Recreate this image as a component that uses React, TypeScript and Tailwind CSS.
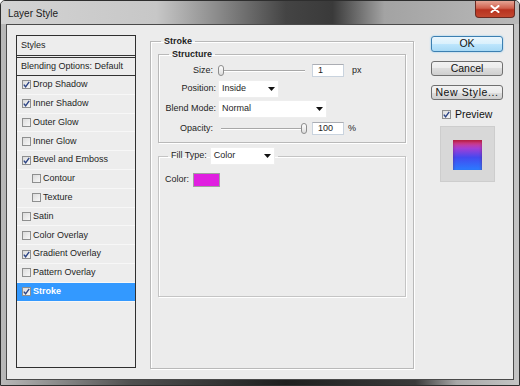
import React from "react";

type Item = { label: string; checked?: boolean; indent?: boolean; active?: boolean };

const items: Item[] = [
  { label: "Drop Shadow", checked: true },
  { label: "Inner Shadow", checked: true },
  { label: "Outer Glow" },
  { label: "Inner Glow" },
  { label: "Bevel and Emboss", checked: true },
  { label: "Contour", indent: true },
  { label: "Texture", indent: true },
  { label: "Satin" },
  { label: "Color Overlay" },
  { label: "Gradient Overlay", checked: true },
  { label: "Pattern Overlay" },
  { label: "Stroke", checked: true, active: true },
];

const Check = ({ checked }: { checked?: boolean }) => (
  <div className="w-[9px] h-[9px] shrink-0 border border-[#8e8f8f] bg-[linear-gradient(135deg,#dcdcdc,#f7f7f7)] flex items-center justify-center">
    {checked && (
      <svg width="7" height="7" viewBox="0 0 7 7">
        <path d="M0.8 3.6 L2.6 5.8 L6.2 0.8" fill="none" stroke="#2d4585" strokeWidth="1.4" />
      </svg>
    )}
  </div>
);

const Arrow = () => (
  <svg width="7" height="4" viewBox="0 0 7 4" className="shrink-0">
    <path d="M0 0 H7 L3.5 4 Z" fill="#111" />
  </svg>
);

const Select = ({ value, w }: { value: string; w: string }) => (
  <div className={`${w} h-[18px] bg-white border border-[#eeeeee] flex items-center justify-between pl-[3px] pr-[3px]`}>
    <span>{value}</span>
    <Arrow />
  </div>
);

const Slider = ({ end }: { end?: boolean }) => (
  <div className="relative w-[90px] h-[13px] flex items-center px-[3px]">
    <div className="w-full h-[2px] border-t border-[#a8a8a8] border-b border-b-white" />
    <div
      className={`absolute top-[1px] w-[6px] h-[11px] rounded-[3px] border border-[#8d8d8d] bg-[linear-gradient(#ffffff,#dcdcdc)] ${
        end ? "right-[1px]" : "left-0"
      }`}
    />
  </div>
);

const Input = ({ value }: { value: string }) => (
  <div className="w-[32px] h-[13px] bg-white border border-[#c9d3de] border-t-[#abadb3] flex items-center pl-[5px]">
    {value}
  </div>
);

const Button = ({ label, primary, cls }: { label: string; primary?: boolean; cls?: string }) => (
  <div
    className={`w-[72px] flex items-center justify-center rounded-[3px] text-[10.5px] text-[#111] ${
      primary
        ? "h-[16px] border border-[#3c7fb1] bg-[linear-gradient(#eaf6fd,#d9f0fc_50%,#bee6fd_50%,#a7d9f5)] shadow-[0_0_2px_#7ec4f0]"
        : "h-[15px] border border-[#707070] bg-[linear-gradient(#f2f2f2,#ebebeb_50%,#dddddd_50%,#cfcfcf)]"
    } ${cls ?? ""}`}
  >
    {label}
  </div>
);

export default function App() {
  return (
    <div className="w-[520px] h-[386px] flex flex-col border border-[#2e2e2e] rounded-t-[5px] overflow-hidden bg-[linear-gradient(to_right,#b9b9b9,#505050_25%,#1f1f1f_55%,#3a3a3a_80%,#a8a8a8_88%,#c4c4c4)] font-['Liberation_Sans',Arial,sans-serif] text-[9px] text-[#1e1e1e]">
      {/* title bar */}
      <div className="h-[23px] shrink-0 flex items-start justify-between bg-[linear-gradient(to_right,#d3d3d3_0%,#c7c7c7_30%,#8a8a8a_42%,#444_55%,#3a3a3a_64%,#a3a3a3_74%,#b9b9b9_100%)]">
        <span className="ml-[7px] mt-[5px] text-[10px] text-[#1b1b1b]">Layer Style</span>
        <div className="mr-[4px] w-[40px] h-[17px] rounded-b-[4px] border border-t-0 border-[#6a2a22] bg-[linear-gradient(#e6a595,#d0604d_45%,#b8321f_55%,#c2472f)] flex items-center justify-center">
          <svg width="10" height="8" viewBox="0 0 10 8">
            <path d="M1.5 1 L8.5 7 M8.5 1 L1.5 7" stroke="#fff" strokeWidth="2" strokeLinecap="round" />
          </svg>
        </div>
      </div>

      {/* client area */}
      <div className="flex-1 mx-[5px] mb-[5px] border border-[#4a4a4a] bg-[#ececec] flex items-start pl-[9px]">
        {/* styles list */}
        <div className="mt-[10px] w-[120px] h-[333px] border border-[#2f2f2f] bg-[#ededed] flex flex-col">
          <div className="h-[22px] flex items-center pl-[4px] border-b-[3px] border-double border-[#333]">Styles</div>
          <div className="h-[18px] flex items-center pl-[4px] border-b border-[#333]">Blending Options: Default</div>
          {items.map((it) => (
            <div
              key={it.label}
              className={`h-[18.8px] flex items-center gap-[2px] border-b border-[#f7f7f7] ${
                it.indent ? "pl-[15px]" : "pl-[5px]"
              } ${it.active ? "bg-[#3399ff] text-white font-bold" : ""}`}
            >
              <Check checked={it.checked} />
              <span>{it.label}</span>
            </div>
          ))}
        </div>

        {/* stroke group */}
        <fieldset className="ml-[14px] mt-[11px] w-[264px] h-[333px] border border-[#b9b9b9] shadow-[1px_1px_0_#fff,inset_1px_1px_0_#fff] flex flex-col">
          <legend className="ml-[10px] px-[3px] leading-[11px] font-bold">Stroke</legend>

          <fieldset className="ml-[7px] mt-[2px] w-[248px] border border-[#b9b9b9] shadow-[1px_1px_0_#fff,inset_1px_1px_0_#fff] pb-[7px]">
            <legend className="ml-[10px] px-[3px] leading-[11px] font-bold">Structure</legend>
            <div className="mt-[4px] h-[13px] flex items-center">
              <span className="w-[57px] text-right pr-[3px]">Size:</span>
              <div className="ml-[2px]">
                <Slider />
              </div>
              <div className="ml-[4px]">
                <Input value="1" />
              </div>
              <span className="ml-[8px]">px</span>
            </div>
            <div className="mt-[3px] h-[18px] flex items-center">
              <span className="w-[57px] text-right">Position:</span>
              <div className="ml-[2px]">
                <Select value="Inside" w="w-[61px]" />
              </div>
            </div>
            <div className="mt-[2px] h-[18px] flex items-center">
              <span className="w-[57px] text-right">Blend Mode:</span>
              <div className="ml-[2px]">
                <Select value="Normal" w="w-[109px]" />
              </div>
            </div>
            <div className="mt-[4px] h-[13px] flex items-center">
              <span className="w-[57px] text-right pr-[3px]">Opacity:</span>
              <div className="ml-[2px]">
                <Slider end />
              </div>
              <div className="ml-[4px]">
                <Input value="100" />
              </div>
              <span className="ml-[4px]">%</span>
            </div>
          </fieldset>

          <fieldset className="ml-[7px] mt-[4px] w-[248px] h-[150px] border border-[#c4c4c4] shadow-[1px_1px_0_#fff,inset_1px_1px_0_#fff]">
            <legend className="ml-[9px] px-[3px] flex items-center">
              <span>Fill Type:</span>
              <div className="ml-[3px]">
                <Select value="Color" w="w-[65px]" />
              </div>
            </legend>
            <div className="mt-[8px] ml-[6px] flex items-center">
              <span>Color:</span>
              <div className="ml-[4px] w-[27px] h-[14px] bg-[#e01fe0] border border-[#a0a0a0]" />
            </div>
          </fieldset>
        </fieldset>

        {/* buttons */}
        <div className="ml-[17px] mt-[11px] w-[72px] flex flex-col">
          <Button label="OK" primary />
          <Button label="Cancel" cls="mt-[9px]" />
          <Button label="New Style..." cls="mt-[9px] tracking-[0.6px]" />
          <div className="mt-[7px] ml-[11px] flex items-center gap-[4px] text-[10.5px] text-[#111]">
            <Check checked />
            <span>Preview</span>
          </div>
          <div className="mt-[3px] ml-[9px] w-[55px] h-[56px] bg-[#d8d8d8] border border-[#cdcdcd] flex justify-center pt-[13px]">
            <div className="w-[29px] h-[30px] bg-[linear-gradient(to_bottom,#ea3a5c_0%,#a23fd6_28%,#4449ef_58%,#2a7cff_100%)] shadow-[inset_0_2px_3px_rgba(120,0,40,0.5)]" />
          </div>
        </div>
      </div>
    </div>
  );
}
